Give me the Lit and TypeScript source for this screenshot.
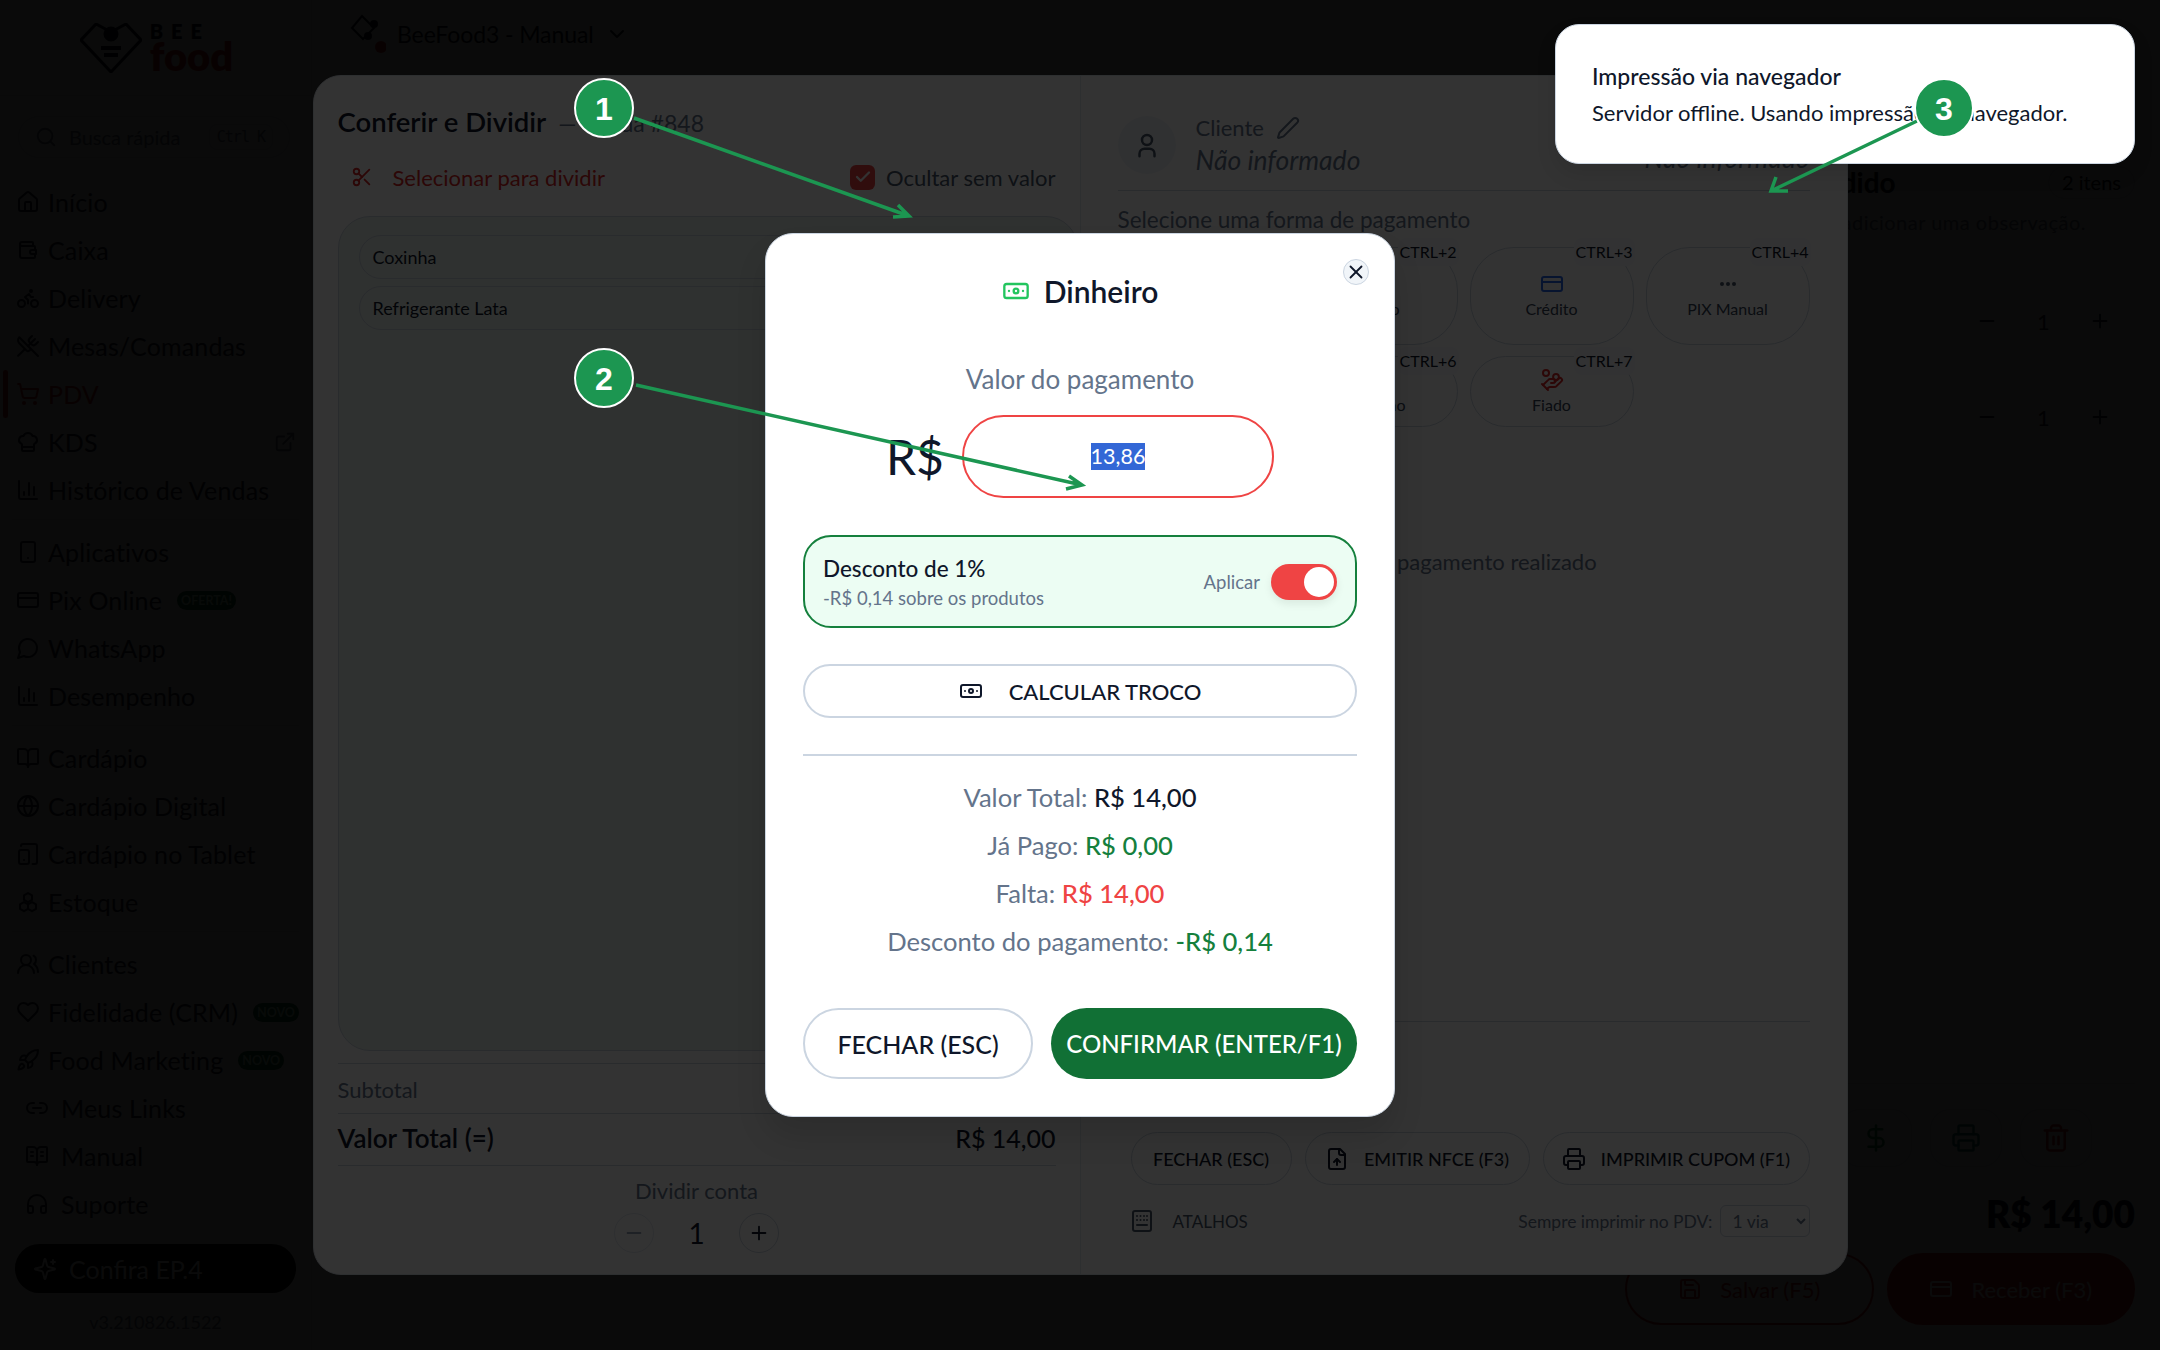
import { LitElement, html, css, svg, nothing } from "lit";
import { customElement } from "lit/decorators.js";

const P: Record<string, any> = {
  home: svg`<path d="M15 21v-8a1 1 0 0 0-1-1h-4a1 1 0 0 0-1 1v8"/><path d="M3 10a2 2 0 0 1 .709-1.528l7-6a2 2 0 0 1 2.582 0l7 6A2 2 0 0 1 21 10v9a2 2 0 0 1-2 2H5a2 2 0 0 1-2-2z"/>`,
  wallet: svg`<path d="M17 8V5a1 1 0 0 0-1-1H6a2 2 0 0 0 0 4h12a1 1 0 0 1 1 1v3"/><path d="M19 16v3a1 1 0 0 1-1 1H6a2 2 0 0 1-2-2V6"/><path d="M20 12v4h-4a2 2 0 0 1 0-4h4"/>`,
  bike: svg`<circle cx="18.5" cy="17.5" r="3.5"/><circle cx="5.5" cy="17.5" r="3.5"/><circle cx="15" cy="5" r="1"/><path d="M12 17.5V14l-3-3 4-3 2 3h2"/>`,
  utensils: svg`<path d="m16 2-2.3 2.3a3 3 0 0 0 0 4.2l1.8 1.8a3 3 0 0 0 4.2 0L22 8"/><path d="M15 15 3.3 3.3a4.2 4.2 0 0 0 0 6l7.3 7.3c.7.7 2 .7 2.8 0L15 15Zm0 0 7 7"/><path d="m2.1 21.8 6.4-6.3"/><path d="m19 5-7 7"/>`,
  cart: svg`<circle cx="8" cy="21" r="1"/><circle cx="19" cy="21" r="1"/><path d="M2.05 2.05h2l2.66 12.42a2 2 0 0 0 2 1.58h9.78a2 2 0 0 0 1.95-1.57l1.65-7.43H5.12"/>`,
  chef: svg`<path d="M17 21a1 1 0 0 0 1-1v-5.35c0-.457.316-.844.727-1.041a4 4 0 0 0-2.134-7.589 5 5 0 0 0-9.186 0 4 4 0 0 0-2.134 7.588c.411.198.727.585.727 1.041V20a1 1 0 0 0 1 1Z"/><path d="M6 17h12"/>`,
  external: svg`<path d="M15 3h6v6"/><path d="M10 14 21 3"/><path d="M18 13v6a2 2 0 0 1-2 2H5a2 2 0 0 1-2-2V8a2 2 0 0 1 2-2h6"/>`,
  chart: svg`<path d="M3 3v16a2 2 0 0 0 2 2h16"/><path d="M18 17V9"/><path d="M13 17V5"/><path d="M8 17v-3"/>`,
  phone: svg`<rect x="5" y="2" width="14" height="20" rx="2"/><path d="M12 18h.01"/>`,
  card: svg`<rect x="2" y="5" width="20" height="14" rx="2"/><line x1="2" x2="22" y1="10" y2="10"/>`,
  message: svg`<path d="M7.9 20A9 9 0 1 0 4 16.1L2 22Z"/>`,
  book: svg`<path d="M12 7v14"/><path d="M3 18a1 1 0 0 1-1-1V4a1 1 0 0 1 1-1h5a4 4 0 0 1 4 4 4 4 0 0 1 4-4h5a1 1 0 0 1 1 1v13a1 1 0 0 1-1 1h-6a3 3 0 0 0-3 3 3 3 0 0 0-3-3z"/>`,
  bookText: svg`<path d="M12 7v14"/><path d="M16 8h2"/><path d="M16 12h2"/><path d="M6 8h2"/><path d="M6 12h2"/><path d="M3 18a1 1 0 0 1-1-1V4a1 1 0 0 1 1-1h5a4 4 0 0 1 4 4 4 4 0 0 1 4-4h5a1 1 0 0 1 1 1v13a1 1 0 0 1-1 1h-6a3 3 0 0 0-3 3 3 3 0 0 0-3-3z"/>`,
  globe: svg`<circle cx="12" cy="12" r="10"/><path d="M12 2a14.5 14.5 0 0 0 0 20 14.5 14.5 0 0 0 0-20"/><path d="M2 12h20"/>`,
  tablet: svg`<rect x="3" y="8" width="10" height="14" rx="2"/><path d="M5 4a2 2 0 0 1 2-2h12a2 2 0 0 1 2 2v16a2 2 0 0 1-2 2h-2.4"/><path d="M8 18h.01"/>`,
  boxes: svg`<path d="M12 3l4 2.3v4.6l-4 2.3-4-2.3V5.3z"/><path d="M8 12l4 2.3v4.6L8 21.2 4 18.9v-4.6z"/><path d="M16 12l4 2.3v4.6l-4 2.3-4-2.3v-4.6z"/>`,
  users: svg`<path d="M18 21a8 8 0 0 0-16 0"/><circle cx="10" cy="8" r="5"/><path d="M22 20c0-3.37-2-6.5-4-8a5 5 0 0 0-.45-8.3"/>`,
  heart: svg`<path d="M19 14c1.49-1.46 3-3.21 3-5.5A5.5 5.5 0 0 0 16.5 3c-1.76 0-3 .5-4.5 2-1.5-1.5-2.74-2-4.5-2A5.5 5.5 0 0 0 2 8.5c0 2.3 1.5 4.05 3 5.5l7 7Z"/>`,
  rocket: svg`<path d="M4.5 16.5c-1.5 1.26-2 5-2 5s3.74-.5 5-2c.71-.84.7-2.13-.09-2.91a2.18 2.18 0 0 0-2.91-.09z"/><path d="m12 15-3-3a22 22 0 0 1 2-3.95A12.88 12.88 0 0 1 22 2c0 2.72-.78 7.5-6 11a22.35 22.35 0 0 1-4 2z"/><path d="M9 12H4s.55-3.03 2-4c1.62-1.08 5 0 5 0"/><path d="M12 15v5s3.03-.55 4-2c1.08-1.62 0-5 0-5"/>`,
  link: svg`<path d="M9 17H7A5 5 0 0 1 7 7h2"/><path d="M15 7h2a5 5 0 1 1 0 10h-2"/><line x1="8" x2="16" y1="12" y2="12"/>`,
  headphones: svg`<path d="M3 14h3a2 2 0 0 1 2 2v3a2 2 0 0 1-2 2H5a2 2 0 0 1-2-2v-7a9 9 0 0 1 18 0v7a2 2 0 0 1-2 2h-1a2 2 0 0 1-2-2v-3a2 2 0 0 1 2-2h3"/>`,
  sparkles: svg`<path d="M9.937 15.5A2 2 0 0 0 8.5 14.063l-6.135-1.582a.5.5 0 0 1 0-.962L8.5 9.936A2 2 0 0 0 9.937 8.5l1.582-6.135a.5.5 0 0 1 .963 0L14.063 8.5A2 2 0 0 0 15.5 9.937l6.135 1.581a.5.5 0 0 1 0 .964L15.5 14.063a2 2 0 0 0-1.437 1.437l-1.582 6.135a.5.5 0 0 1-.963 0z"/><path d="M20 3v4"/><path d="M22 5h-4"/>`,
  search: svg`<circle cx="11" cy="11" r="8"/><path d="m21 21-4.3-4.3"/>`,
  scissors: svg`<circle cx="6" cy="6" r="3"/><path d="M8.12 8.12 12 12"/><path d="M20 4 8.12 15.88"/><circle cx="6" cy="18" r="3"/><path d="M14.8 14.8 20 20"/>`,
  user: svg`<circle cx="12" cy="8" r="4"/><path d="M6 21v-2a4 4 0 0 1 4-4h4a4 4 0 0 1 4 4v2"/>`,
  pencil: svg`<path d="M21.174 6.812a1 1 0 0 0-3.986-3.987L3.842 16.174a2 2 0 0 0-.5.83l-1.321 4.352a.5.5 0 0 0 .623.622l4.353-1.32a2 2 0 0 0 .83-.497z"/>`,
  dots: svg`<circle cx="6" cy="12" r="1"/><circle cx="12" cy="12" r="1"/><circle cx="18" cy="12" r="1"/>`,
  hand: svg`<path d="M11 15h2a2 2 0 1 0 0-4h-3c-.6 0-1.1.2-1.4.6L3 17"/><path d="m7 21 1.6-1.4c.3-.4.8-.6 1.4-.6h4c1.1 0 2.1-.4 2.8-1.2l4.6-4.4a2 2 0 0 0-2.75-2.91l-4.2 3.9"/><path d="m2 16 6 6"/><circle cx="16" cy="9" r="2.9"/><circle cx="6" cy="5" r="3"/>`,
  note: svg`<rect x="2" y="6" width="20" height="12" rx="2"/><circle cx="12" cy="12" r="2"/><path d="M6 12h.01"/><path d="M18 12h.01"/>`,
  x: svg`<path d="M18 6 6 18"/><path d="m6 6 12 12"/>`,
  file: svg`<path d="M15 2H6a2 2 0 0 0-2 2v16a2 2 0 0 0 2 2h12a2 2 0 0 0 2-2V7Z"/><path d="M14 2v4a2 2 0 0 0 2 2h4"/><path d="M12 12v6"/><path d="m15 15-3-3-3 3"/>`,
  printer: svg`<path d="M6 18H4a2 2 0 0 1-2-2v-5a2 2 0 0 1 2-2h16a2 2 0 0 1 2 2v5a2 2 0 0 1-2 2h-2"/><path d="M6 9V3a1 1 0 0 1 1-1h10a1 1 0 0 1 1 1v6"/><rect x="6" y="14" width="12" height="8" rx="1"/>`,
  keyboard: svg`<rect x="3" y="2" width="18" height="20" rx="2"/><path d="M7 7h.01M10.5 7h.01M14 7h.01M17 7h.01M7 11h.01M10.5 11h.01M14 11h.01M17 11h.01"/><path d="M7 16h10"/>`,
  trash: svg`<path d="M3 6h18"/><path d="M19 6v14c0 1-1 2-2 2H7c-1 0-2-1-2-2V6"/><path d="M8 6V4c0-1 1-2 2-2h4c1 0 2 1 2 2v2"/><line x1="10" x2="10" y1="11" y2="17"/><line x1="14" x2="14" y1="11" y2="17"/>`,
  save: svg`<path d="M15.2 3a2 2 0 0 1 1.4.6l3.8 3.8a2 2 0 0 1 .6 1.4V19a2 2 0 0 1-2 2H5a2 2 0 0 1-2-2V5a2 2 0 0 1 2-2z"/><path d="M17 21v-7a1 1 0 0 0-1-1H8a1 1 0 0 0-1 1v7"/><path d="M7 3v4a1 1 0 0 0 1 1h7"/>`,
  dollar: svg`<line x1="12" x2="12" y1="2" y2="22"/><path d="M17 5H9.5a3.5 3.5 0 0 0 0 7h5a3.5 3.5 0 0 1 0 7H6"/>`,
  chevron: svg`<path d="m6 9 6 6 6-6"/>`,
  minus: svg`<path d="M5 12h14"/>`,
  plus: svg`<path d="M5 12h14"/><path d="M12 5v14"/>`,
  check: svg`<path d="M20 6 9 17l-5-5"/>`,
};

const ic = (name: string, size: number, sw = 2) =>
  html`<svg class="ic" width=${size} height=${size} viewBox="0 0 24 24" fill="none" stroke="currentColor" stroke-width=${sw} stroke-linecap="round" stroke-linejoin="round">${P[name]}</svg>`;

type Nav = { l: string; i: string; badge?: string; sub?: boolean; active?: boolean; ext?: boolean; sep?: boolean };
const NAV: Nav[] = [
  { l: "Início", i: "home" },
  { l: "Caixa", i: "wallet" },
  { l: "Delivery", i: "bike" },
  { l: "Mesas/Comandas", i: "utensils" },
  { l: "PDV", i: "cart", active: true },
  { l: "KDS", i: "chef", ext: true },
  { l: "Histórico de Vendas", i: "chart", sep: true },
  { l: "Aplicativos", i: "phone" },
  { l: "Pix Online", i: "card", badge: "OFERTA!" },
  { l: "WhatsApp", i: "message" },
  { l: "Desempenho", i: "chart", sep: true },
  { l: "Cardápio", i: "book" },
  { l: "Cardápio Digital", i: "globe" },
  { l: "Cardápio no Tablet", i: "tablet" },
  { l: "Estoque", i: "boxes", sep: true },
  { l: "Clientes", i: "users" },
  { l: "Fidelidade (CRM)", i: "heart", badge: "NOVO" },
  { l: "Food Marketing", i: "rocket", badge: "NOVO" },
  { l: "Meus Links", i: "link", sub: true },
  { l: "Manual", i: "bookText", sub: true },
  { l: "Suporte", i: "headphones", sub: true },
];

const PAY = [
  { l: "Dinheiro", i: "note", k: "CTRL+1", c: "c-green" },
  { l: "Débito", i: "card", k: "CTRL+2", c: "c-blue" },
  { l: "Crédito", i: "card", k: "CTRL+3", c: "c-blue" },
  { l: "PIX Manual", i: "dots", k: "CTRL+4", c: "c-slate" },
  { l: "Alimentação", i: "utensils", k: "CTRL+5", c: "c-slate" },
  { l: "Refeição", i: "utensils", k: "CTRL+6", c: "c-slate" },
  { l: "Fiado", i: "hand", k: "CTRL+7", c: "c-red" },
];

@customElement("app-root")
export class AppRoot extends LitElement {
  static styles = css`
    :host {
      display: block;
      width: 2160px;
      height: 1350px;
      position: relative;
      overflow: hidden;
      background: #fff;
      color: #0f172a;
      font-family: Lato, "Noto Sans", sans-serif;
    }
    * { box-sizing: border-box; }
    .ic { flex: none; display: block; }

    /* base page */
    .page { display: flex; width: 2160px; height: 1350px; }
    .side { width: 312px; flex: none; display: flex; flex-direction: column; border-right: 1px solid #e2e8f0; }
    .logo { height: 96px; flex: none; display: flex; align-items: center; justify-content: center; gap: 8px; padding-left: 2px; border-bottom: 1px solid #e2e8f0; }
    .logo-t { display: flex; flex-direction: column; font-weight: 800; line-height: 1; }
    .logo-b { font-size: 20px; letter-spacing: 8px; }
    .logo-f { font-size: 40px; color: #dc2626; margin-top: -4px; line-height: 38px; }
    .search { margin: 20px 21px 0 18px; height: 42px; flex: none; border: 1px solid #e2e8f0; border-radius: 21px; display: flex; align-items: center; gap: 12px; padding: 0 16px 0 16px; color: #64748b; font-size: 20px; }
    .kbd { margin-left: auto; border: 1px solid #e2e8f0; border-radius: 8px; padding: 3px 7px; font-family: "DejaVu Sans Mono", monospace; font-size: 15px; letter-spacing: -1px; }
    .nav { margin-top: 20px; display: flex; flex-direction: column; }
    .nav-i { height: 48px; flex: none; display: flex; align-items: center; gap: 8px; padding-left: 16px; font-size: 25px; letter-spacing: .15px; position: relative; color: #1e293b; }
    .nav-i.sub { padding-left: 25px; gap: 12px; }
    .nav-i.active { color: #dc2626; }
    .nav-i.active::before { content: ""; position: absolute; left: 3px; top: 0; bottom: 0; width: 5px; background: #dc2626; border-radius: 3px; }
    .ext { position: absolute; right: 15px; color: #64748b; }
    .badge { background: #166534; color: #bbf7d0; font-size: 12.5px; letter-spacing: 0; font-weight: 700; border-radius: 10px; padding: 0 4px; height: 19px; line-height: 19px; margin-left: 7px; }
    .sep { height: 1px; background: #e2e8f0; margin: 5px 12px 8px; flex: none; }
    .cta { margin: 16px 15px 0; height: 49px; border-radius: 25px; background: #000; color: #fff; display: flex; align-items: center; gap: 12px; padding: 0 18px; font-size: 25px; flex: none; }
    .ver { text-align: center; margin-top: 18px; font-size: 18px; color: #64748b; }
    .main { flex: 1; min-width: 0; display: flex; flex-direction: column; }
    .top { height: 68px; flex: none; display: flex; align-items: center; padding-left: 38px; gap: 11px; font-size: 23px; letter-spacing: -.1px; }
    .store { position: relative; width: 36px; height: 40px; }
    .work { flex: 1; display: flex; justify-content: flex-end; }
    .cart { width: 560px; display: flex; flex-direction: column; padding: 0 25px; }
    .cart-h { display: flex; justify-content: space-between; align-items: center; margin-top: 97px; height: 34px; }
    .cart-t { margin-left: 184px; font-size: 28px; font-weight: 700; }
    .count { border: 1px solid #e2e8f0; border-radius: 17px; height: 33px; width: 87px; display: flex; align-items: center; justify-content: center; font-size: 20px; }
    .obs { text-align: right; padding-right: 49px; margin-top: 11px; font-size: 20px; letter-spacing: .5px; color: #64748b; }
    .items { margin-top: 39px; display: flex; flex-direction: column; }
    .c-item { height: 96px; display: flex; justify-content: flex-end; align-items: center; padding-right: 24px; font-size: 22px; color: #1e293b; }
    .c-item span { width: 57px; text-align: center; margin: 0 17px; }
    .c-tools { margin-top: auto; border-top: 1px solid #e2e8f0; display: flex; justify-content: flex-end; gap: 18px; padding: 25px 43px 0 0; height: 112px; }
    .tool { width: 72px; height: 58px; border: 1px solid #e2e8f0; border-radius: 20px; display: flex; align-items: center; justify-content: center; }
    .t-g { color: #15803d; } .t-b { color: #0f766e; } .t-r { color: #dc2626; }
    .c-total { display: flex; justify-content: flex-end; align-items: center; font-size: 37px; font-weight: 800; height: 46px; margin-top: -5px; gap: 270px; }
    .c-btns { display: flex; gap: 13px; margin: 17px 0 25px; justify-content: flex-end; }
    .c-btn { width: 252px; height: 72px; border-radius: 36px; border: 2px solid #dc2626; display: flex; align-items: center; justify-content: center; gap: 18px; font-size: 22px; color: #dc2626; }
    .c-btn.fill { background: #dc2626; color: #fff; }

    /* layers */
    .backdrop { position: absolute; inset: 0; background: rgba(0, 0, 0, .8); display: flex; align-items: center; justify-content: center; }

    /* modal 1 */
    .m1 { width: 1535px; height: 1200px; background: #fff; border-radius: 28px; display: flex; border: 1px solid #e2e8f0; }
    .left { width: 767px; flex: none; border-right: 1px solid #e2e8f0; padding: 29px 24px 0 24px; display: flex; flex-direction: column; }
    .l-title { display: flex; align-items: baseline; gap: 12px; height: 36px; }
    .l-title b { font-size: 27.5px; font-weight: 600; }
    .l-title span { font-size: 23px; color: #64748b; }
    .l-acts { display: flex; justify-content: space-between; align-items: center; height: 36px; margin-top: 18px; font-size: 22px; padding-left: 13px; }
    .sel { display: flex; align-items: center; gap: 20px; color: #dc2626; }
    .hide { display: flex; align-items: center; gap: 11px; color: #475569; }
    .chk { width: 25px; height: 25px; background: #ef4444; border-radius: 6px; display: flex; align-items: center; justify-content: center; color: #fff; }
    .panel { margin: 21px -22px 0 0; height: 835px; border: 1px solid #cbd5e1; border-radius: 32px; padding: 18px 20px; display: flex; flex-direction: column; gap: 7px; background: #ecf3ee; }
    .p-i { height: 44px; border: 1px solid #cbd5e1; border-radius: 22px; display: flex; align-items: center; padding-left: 13px; font-size: 18px; flex: none; }
    .row { display: flex; justify-content: space-between; align-items: center; border-bottom: 1px solid #cbd5e1; }
    .row.sub { height: 51px; padding-top: 2px; border-top: 1px solid #cbd5e1; margin-top: 12px; color: #64748b; font-size: 22px; }
    .row.tot { height: 52px; padding-bottom: 3px; font-size: 26px; font-weight: 600; }
    .row.tot span:last-child { font-weight: 500; font-size: 25px; }
    .split { text-align: center; font-size: 22px; color: #64748b; margin-top: 12px; line-height: 26px; }
    .stepper { display: flex; justify-content: center; align-items: center; margin-top: 9px; font-size: 28px; }
    .circ { width: 40px; height: 40px; border: 1px solid #cbd5e1; border-radius: 50%; display: flex; align-items: center; justify-content: center; }
    .circ.off { color: #94a3b8; border-color: #e2e8f0; }
    .stepper span { width: 85px; text-align: center; }

    .right { flex: 1; padding: 40px 37px 37px 37px; display: flex; flex-direction: column; min-width: 0; }
    .cust { display: flex; align-items: center; height: 75px; border-bottom: 1px solid #cbd5e1; flex: none; gap: 20px; padding-bottom: 16px; }
    .ava { width: 58px; height: 58px; border-radius: 50%; background: #f1f5f9; color: #475569; display: flex; align-items: center; justify-content: center; }
    .c-n { display: flex; flex-direction: column; gap: 4px; }
    .c-l { display: flex; align-items: center; gap: 12px; font-size: 22px; color: #64748b; }
    .c-v { font-size: 26.5px; font-style: italic; color: #64748b; line-height: 31px; }
    .c-r { margin-left: auto; font-size: 26.5px; font-style: italic; color: #64748b; align-self: flex-end; }
    .pick { margin-top: 16px; font-size: 22.5px; line-height: 26px; color: #64748b; }
    .grid { margin-top: 14px; display: grid; grid-template-columns: repeat(4, 164px); grid-template-rows: 98px 71px; gap: 11px 12px; }
    .pay { position: relative; border: 1px solid #cbd5e1; border-radius: 44px; display: flex; flex-direction: column; align-items: center; justify-content: center; gap: 3px; font-size: 16px; color: #334155; }
    .pay > span:nth-child(2) { margin-top: -2px; }
    .kb { position: absolute; top: -10px; right: -2px; background: #f8fafc; border-radius: 8px; padding: 0 2px; height: 28px; line-height: 28px; font-size: 16px; color: #0f172a; }
    .c-green { color: #22c55e; } .c-blue { color: #2563eb; } .c-slate { color: #475569; } .c-red { color: #dc2626; }
    .empty { flex: 1; border-bottom: 1px solid #cbd5e1; padding: 122px 22px 0 0; text-align: center; font-size: 22px; line-height: 26px; color: #64748b; }
    .acts { display: flex; justify-content: flex-end; gap: 13px; margin-top: 110px; }
    .btn { height: 53px; border: 1px solid #cbd5e1; border-radius: 27px; display: flex; align-items: center; justify-content: center; gap: 15px; font-size: 18px; font-weight: 500; }
    .foot { display: flex; align-items: center; height: 32px; margin-top: 20px; padding-left: 12px; gap: 19px; color: #475569; font-size: 17px; }
    .foot .r { margin-left: auto; display: flex; align-items: center; gap: 7px; color: #64748b; font-size: 17.5px; }
    select { width: 90px; height: 32px; border: 1px solid #cbd5e1; border-radius: 6px; background: #fff; font: inherit; color: #64748b; padding-left: 8px; }

    /* modal 2 */
    .m2 { position: relative; width: 630px; height: 884px; background: #fff; border: 1px solid #cbd5e1; border-radius: 28px; padding: 37px 37px 0; display: flex; flex-direction: column; box-shadow: 0 20px 30px rgba(0, 0, 0, .12); }
    .close { position: absolute; right: 25px; top: 25px; width: 26px; height: 26px; border-radius: 50%; background: #f1f5f9; border: 1px solid #cbd5e1; display: flex; align-items: center; justify-content: center; color: #0f172a; }
    .m2-t { display: flex; align-items: center; justify-content: center; gap: 14px; height: 40px; font-size: 30px; font-weight: 600; }
    .m2-l { text-align: center; margin-top: 53px; font-size: 26px; line-height: 30px; color: #64748b; }
    .amt { display: flex; align-items: center; margin-top: 21px; padding-left: 85px; gap: 20px; }
    .amt-c { font-size: 48px; width: 56px; font-weight: 400; white-space: nowrap; margin-left: -2px; }
    .amt-i { width: 312px; height: 83px; border: 2px solid #ef4444; border-radius: 42px; display: flex; align-items: center; justify-content: center; font-size: 21.5px; }
    .amt-i span { background: #3367d6; color: #fff; line-height: 27px; }
    .disc { margin-top: 37px; height: 93px; background: #ecfdf3; border: 2px solid #15803d; border-radius: 28px; display: flex; align-items: center; padding: 0 18px; flex: none; }
    .d-t { display: flex; flex-direction: column; gap: 4px; }
    .d-t b { font-size: 22.5px; font-weight: 500; line-height: 28px; }
    .d-t span { font-size: 18.5px; line-height: 22px; color: #64748b; }
    .d-a { margin-left: auto; font-size: 18.5px; color: #64748b; margin-right: 11px; }
    .tog { width: 66px; height: 36px; border-radius: 18px; background: #ef4444; position: relative; box-shadow: 0 4px 8px rgba(0,0,0,.08); }
    .tog::after { content: ""; position: absolute; right: 3px; top: 3px; width: 30px; height: 30px; border-radius: 50%; background: #fff; }
    .calc { margin-top: 36px; height: 54px; border: 2px solid #cbd5e1; border-radius: 27px; display: flex; align-items: center; justify-content: center; gap: 26px; font-size: 22px; font-weight: 500; flex: none; }
    .m2 hr { margin: 36px 0 0; border: 0; height: 2px; background: #cbd5e1; flex: none; width: 100%; }
    .sum { margin-top: 17px; display: flex; flex-direction: column; text-align: center; font-size: 25.6px; line-height: 48px; color: #64748b; }
    .sum i { font-style: normal; color: #0f172a; font-weight: 500; }
    .sum i.g { color: #15803d; } .sum i.r { color: #ef4444; }
    .m2-b { display: flex; gap: 18px; margin-top: 43px; }
    .b-l { height: 71px; border-radius: 36px; display: flex; align-items: center; justify-content: center; font-size: 25px; font-weight: 500; white-space: nowrap; }
    .b-o { width: 230px; border: 2px solid #cbd5e1; }
    .b-f { flex: 1; background: #117035; color: #fff; font-size: 24px; }

    /* toast + notes */
    .toast { position: absolute; left: 1555px; top: 24px; width: 580px; height: 140px; background: #fff; border: 1px solid #cbd5e1; border-radius: 24px; padding: 0 36px; display: flex; flex-direction: column; justify-content: center; gap: 9px; font-size: 22px; box-shadow: 0 10px 20px rgba(0, 0, 0, .1); }
    .toast b { font-weight: 500; font-size: 23px; }
    .notes { position: absolute; inset: 0; width: 2160px; height: 1350px; pointer-events: none; }
    .notes text { font-family: "Liberation Sans", Arial, sans-serif; font-weight: 700; font-size: 32px; fill: #fff; text-anchor: middle; }
  `;

  private navItem(n: Nav) {
    return html`<div class="nav-i ${n.sub ? "sub" : ""} ${n.active ? "active" : ""}">
        ${ic(n.i, 24)}<span>${n.l}</span>
        ${n.badge ? html`<span class="badge">${n.badge}</span>` : nothing}
        ${n.ext ? html`<span class="ext">${ic("external", 22)}</span>` : nothing}
      </div>
      ${n.sep ? html`<div class="sep"></div>` : nothing}`;
  }

  private logo() {
    return html`<svg width="62" height="50" viewBox="0 0 62 50" fill="none" stroke="#0f172a" stroke-width="3" stroke-linejoin="round">
      <path d="M31 9 L46 1 L61 17 L31 49 L1 17 L16 1 Z" />
      <circle cx="31" cy="11" r="6" fill="#0f172a" />
      <path d="M21 25h20M24 32h14" stroke-width="4" />
    </svg>`;
  }

  private store() {
    return html`<svg width="36" height="40" viewBox="0 0 36 40" fill="none">
      <path d="M12 2 L24 14 L13 25 L2 14 Z" stroke="#0f172a" stroke-width="2" />
      <circle cx="24" cy="10" r="4" fill="#0f172a" /><circle cx="18" cy="22" r="4" fill="#0f172a" />
      <circle cx="31" cy="33" r="6" fill="#dc2626" />
    </svg>`;
  }

  private side() {
    return html`<aside class="side">
      <div class="logo">${this.logo()}<div class="logo-t"><span class="logo-b">BEE</span><span class="logo-f">food</span></div></div>
      <div class="search">${ic("search", 22)}<span>Busca rápida</span><span class="kbd">Ctrl K</span></div>
      <nav class="nav">${NAV.map((n) => this.navItem(n))}</nav>
      <div class="cta">${ic("sparkles", 24)}<span>Confira EP.4</span></div>
      <div class="ver">v3.210826.1522</div>
    </aside>`;
  }

  private cart() {
    return html`<section class="cart">
      <div class="cart-h"><span class="cart-t">Pedido</span><span class="count">2 itens</span></div>
      <div class="obs">Clique para adicionar uma observação.</div>
      <div class="items">
        ${[1, 2].map(() => html`<div class="c-item">${ic("minus", 22)}<span>1</span>${ic("plus", 22)}</div>`)}
      </div>
      <div class="c-tools">
        <div class="tool t-g">${ic("dollar", 30)}</div>
        <div class="tool t-b">${ic("printer", 30)}</div>
        <div class="tool t-r">${ic("trash", 30)}</div>
      </div>
      <div class="c-total">${ic("chevron", 22)}<span>R$ 14,00</span></div>
      <div class="c-btns">
        <div class="c-btn">${ic("save", 24)}<span>Salvar (F5)</span></div>
        <div class="c-btn fill">${ic("card", 24)}<span>Receber (F3)</span></div>
      </div>
    </section>`;
  }

  private left() {
    return html`<div class="left">
      <div class="l-title"><b>Conferir e Dividir</b><span>— Venda #848</span></div>
      <div class="l-acts">
        <div class="sel">${ic("scissors", 22)}<span>Selecionar para dividir</span></div>
        <div class="hide"><span class="chk">${ic("check", 18, 3)}</span><span>Ocultar sem valor</span></div>
      </div>
      <div class="panel">
        <div class="p-i">Coxinha</div>
        <div class="p-i">Refrigerante Lata</div>
      </div>
      <div class="row sub"><span>Subtotal</span><span>R$ 14,00</span></div>
      <div class="row tot"><span>Valor Total (=)</span><span>R$ 14,00</span></div>
      <div class="split">Dividir conta</div>
      <div class="stepper">
        <div class="circ off">${ic("minus", 22)}</div><span>1</span><div class="circ">${ic("plus", 22)}</div>
      </div>
    </div>`;
  }

  private right() {
    return html`<div class="right">
      <div class="cust">
        <div class="ava">${ic("user", 30)}</div>
        <div class="c-n">
          <div class="c-l"><span>Cliente</span>${ic("pencil", 24)}</div>
          <div class="c-v">Não informado</div>
        </div>
        <div class="c-r">Não informado</div>
      </div>
      <div class="pick">Selecione uma forma de pagamento</div>
      <div class="grid">
        ${PAY.map((p) => html`<div class="pay"><span class="kb">${p.k}</span><span class=${p.c}>${ic(p.i, 24)}</span><span>${p.l}</span></div>`)}
      </div>
      <div class="empty">Nenhum pagamento realizado</div>
      <div class="acts">
        <div class="btn" style="width:161px">FECHAR (ESC)</div>
        <div class="btn" style="width:225px">${ic("file", 24)}EMITIR NFCE (F3)</div>
        <div class="btn" style="width:267px">${ic("printer", 24)}IMPRIMIR CUPOM (F1)</div>
      </div>
      <div class="foot">
        ${ic("keyboard", 24)}<span>ATALHOS</span>
        <div class="r"><span>Sempre imprimir no PDV:</span><select><option>1 via</option></select></div>
      </div>
    </div>`;
  }

  private payModal() {
    return html`<div class="m2">
      <div class="close">${ic("x", 22)}</div>
      <div class="m2-t"><span class="c-green">${ic("note", 28)}</span><span>Dinheiro</span></div>
      <div class="m2-l">Valor do pagamento</div>
      <div class="amt"><span class="amt-c">R$</span><div class="amt-i"><span>13,86</span></div></div>
      <div class="disc">
        <div class="d-t"><b>Desconto de 1%</b><span>-R$ 0,14 sobre os produtos</span></div>
        <span class="d-a">Aplicar</span><span class="tog"></span>
      </div>
      <div class="calc">${ic("note", 24)}<span>CALCULAR TROCO</span></div>
      <hr />
      <div class="sum">
        <div>Valor Total: <i>R$ 14,00</i></div>
        <div>Já Pago: <i class="g">R$ 0,00</i></div>
        <div>Falta: <i class="r">R$ 14,00</i></div>
        <div>Desconto do pagamento: <i class="g">-R$ 0,14</i></div>
      </div>
      <div class="m2-b"><div class="b-l b-o">FECHAR (ESC)</div><div class="b-l b-f">CONFIRMAR (ENTER/F1)</div></div>
    </div>`;
  }

  private notes() {
    const g = "#1c9651";
    const a = (x1: number, y1: number, x2: number, y2: number, bx1: number, by1: number, bx2: number, by2: number) =>
      svg`<path d="M${x1} ${y1}L${x2} ${y2}M${bx1} ${by1}L${x2} ${y2}L${bx2} ${by2}" stroke=${g} stroke-width="3.5" fill="none"/>`;
    const c = (x: number, y: number, n: string) =>
      svg`<circle cx=${x} cy=${y} r="29" fill=${g} stroke="#fff" stroke-width="2"/><text x=${x} y=${y + 12}>${n}</text>`;
    return html`<svg class="notes" viewBox="0 0 2160 1350">
      ${a(634, 118, 909, 216, 893, 217, 898, 205)} ${a(636, 385, 1082, 485, 1066, 489, 1069, 476)}
      ${a(1917, 121, 1771, 191, 1788, 191, 1776, 177)} ${c(604, 108, "1")} ${c(604, 378, "2")} ${c(1944, 108, "3")}
    </svg>`;
  }

  render() {
    return html`
      <div class="page">
        ${this.side()}
        <div class="main">
          <header class="top"><div class="store">${this.store()}</div><span>BeeFood3 - Manual</span>${ic("chevron", 24)}</header>
          <div class="work">${this.cart()}</div>
        </div>
      </div>
      <div class="backdrop"><div class="m1">${this.left()}${this.right()}</div></div>
      <div class="backdrop">${this.payModal()}</div>
      <div class="toast"><b>Impressão via navegador</b><span>Servidor offline. Usando impressão do navegador.</span></div>
      ${this.notes()}
    `;
  }
}
